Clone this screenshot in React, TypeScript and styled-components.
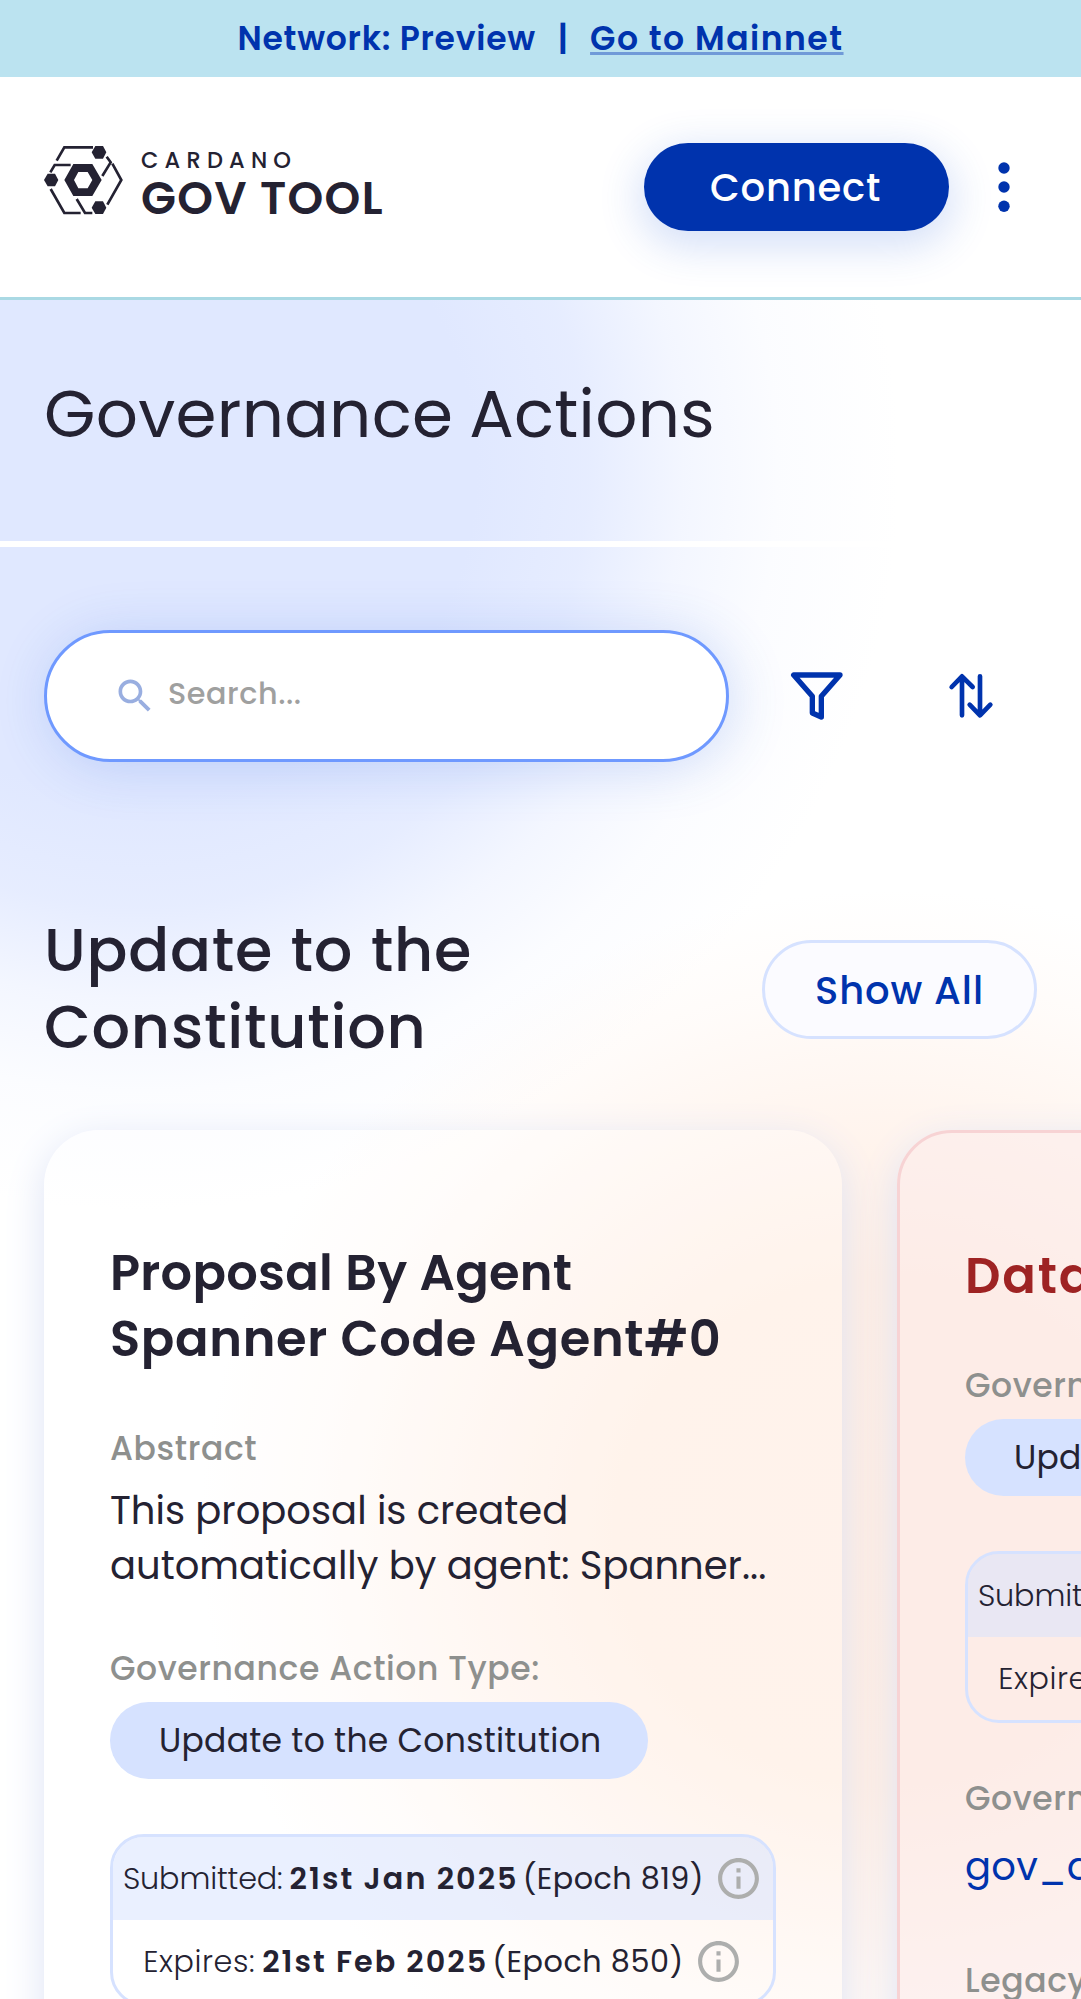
import React from "react";
import styled, { createGlobalStyle, css } from "styled-components";

const navy = "#0033ad";
const ink = "#242232";
const paleBlue = "#d6e2ff";

const GlobalStyle = createGlobalStyle`
  *, *::before, *::after { box-sizing: border-box; }
  body {
    margin: 0;
    background: #fff;
    color: ${ink};
    font-family: Poppins, Inter, "Open Sans", sans-serif;
  }
`;

const type = (size: number, weight: number, line: number) => css`
  font-size: ${size}px;
  font-weight: ${weight};
  line-height: ${line}px;
`;

const Page = styled.div`
  width: 1081px;
  height: 1999px;
  overflow: hidden;
  display: flex;
  flex-direction: column;
  background:
    radial-gradient(ellipse 800px 780px at 140px 470px,
      #e0e8ff 0%, #e0e8ff 42%, rgba(224, 232, 255, 0.8) 56%,
      rgba(224, 232, 255, 0.38) 68%, rgba(224, 232, 255, 0.12) 80%, rgba(224, 232, 255, 0) 95%),
    radial-gradient(ellipse 690px 640px at 890px 1530px,
      #ffede2 0%, #ffeee3 40%, rgba(255, 237, 226, 0.55) 65%,
      rgba(255, 237, 226, 0.2) 84%, rgba(255, 237, 226, 0) 100%),
    #fff;
`;

const Spaced = styled.span<{ $ls: number }>`
  letter-spacing: ${(p) => p.$ls}px;
  white-space: nowrap;
`;

const Banner = styled.div`
  flex: none;
  height: 77px;
  display: flex;
  align-items: center;
  justify-content: center;
  gap: 22px;
  background: #bbe3f0;
  color: ${navy};
  ${type(33, 600, 40)}
`;

const BannerLink = styled.a`
  letter-spacing: 1.5px;
  text-decoration: underline;
  text-decoration-color: #709ad8;
  text-decoration-thickness: 3px;
  text-underline-offset: 2px;
  text-decoration-skip-ink: none;
`;

const Header = styled.header`
  flex: none;
  height: 223px;
  padding: 66px 44px 0;
  display: flex;
  align-items: flex-start;
  justify-content: space-between;
  background: #fff;
  border-bottom: 3px solid #aad9e4;
`;

const Logo = styled.div`
  display: flex;
  gap: 17px;
  padding-top: 2px;
`;

const LogoWords = styled.div`
  display: flex;
  flex-direction: column;
  gap: 2px;
  padding-top: 2px;
`;

const LogoTop = styled.span`
  ${type(22.5, 500, 26)}
  letter-spacing: 6.2px;
`;

const LogoMain = styled.span`
  ${type(45.5, 600, 46)}
  letter-spacing: 1.3px;
`;

const HeaderActions = styled.div`
  display: flex;
  align-items: center;
  gap: 22px;
`;

const ConnectButton = styled.button`
  width: 305px;
  height: 88px;
  padding: 1px 2px 0 0;
  border: 0;
  border-radius: 44px;
  background: ${navy};
  color: #fff;
  font-family: inherit;
  ${type(38.5, 500, 66)}
  letter-spacing: 0.8px;
  box-shadow: 0 11px 41px 5px rgba(47, 98, 220, 0.2);
`;

const TitleBar = styled.div`
  flex: none;
  height: 247px;
  padding: 74px 44px 0;
  border-bottom: 6px solid #fff;
`;

const PageTitle = styled.h1`
  margin: 0;
  ${type(66, 400, 80)}
  letter-spacing: 0.3px;
  word-spacing: -2px;
`;

const Toolbar = styled.div`
  flex: none;
  margin-top: 83px;
  padding: 0 44px;
  display: flex;
  align-items: center;
`;

const SearchField = styled.div`
  width: 685px;
  height: 132px;
  padding: 0 66px;
  display: flex;
  align-items: center;
  gap: 11px;
  border: 3px solid #6f99ff;
  border-radius: 68px;
  background: #fff;
  color: #9fa09f;
  box-shadow: 5px 5px 55px rgba(47, 98, 220, 0.2);
`;

const Placeholder = styled.span`
  ${type(30.25, 500, 40)}
  letter-spacing: 0.55px;
  padding-bottom: 4px;
`;

const ToolIcons = styled.div`
  margin-left: 61px;
  display: flex;
  align-items: center;
  gap: 102px;
`;

const SectionHead = styled.div`
  flex: none;
  margin-top: 150px;
  padding: 0 44px;
  display: flex;
  align-items: center;
  justify-content: space-between;
`;

const SectionTitle = styled.h2`
  margin: 0;
  width: 520px;
  ${type(60.5, 500, 76.5)}
  letter-spacing: 0.75px;
  word-spacing: 1px;
`;

const ShowAll = styled.button`
  width: 275px;
  height: 99px;
  margin-top: 2px;
  padding: 2px 0 0;
  border: 3px solid ${paleBlue};
  border-radius: 50px;
  background: #fbfbff;
  color: ${navy};
  font-family: inherit;
  ${type(38.5, 500, 60)}
  letter-spacing: 0.9px;
`;

const Cards = styled.div`
  flex: none;
  margin-top: 65px;
  padding-left: 44px;
  display: flex;
  align-items: flex-start;
  gap: 55px;
`;

const Card = styled.article<{ $invalid?: boolean }>`
  flex: none;
  width: 798px;
  height: 1300px;
  padding: 110px 66px 0;
  display: flex;
  flex-direction: column;
  align-items: flex-start;
  border-radius: 55px;
  background: rgba(255, 255, 255, 0.3);
  box-shadow: 0 11px 41px #dde3f5;
  ${(p) =>
    p.$invalid &&
    css`
      border: 3px solid #f7d3d4;
      padding: 110px 65px 0;
      background: rgba(251, 235, 235, 0.55);
    `}
`;

const CardTitle = styled.h3<{ $invalid?: boolean }>`
  margin: 0 0 57px;
  display: flex;
  flex-direction: column;
  ${type(49.5, 600, 66)}
  color: ${(p) => (p.$invalid ? "#9e2323" : ink)};
`;

const Label = styled.div`
  ${type(33, 500, 40)}
  color: #8e908e;
  letter-spacing: 0.6px;
  white-space: nowrap;
`;

const Abstract = styled.p`
  margin: 14px 0 56px;
  display: flex;
  flex-direction: column;
  ${type(38.5, 400, 55)}
`;

const TypePill = styled.div`
  height: 77px;
  margin: 13px 0 55px;
  padding: 0 47px 0 49px;
  border-radius: 39px;
  background: ${paleBlue};
  ${type(33, 400, 77)}
  letter-spacing: 0.27px;
  white-space: nowrap;
`;

const Dates = styled.div`
  width: 666px;
  flex: none;
  overflow: hidden;
  border: 3px solid ${paleBlue};
  border-radius: 34px;
`;

const DateRow = styled.div<{ $tinted?: boolean }>`
  height: 83px;
  display: flex;
  align-items: center;
  justify-content: center;
  gap: 4px;
  ${type(30.25, 400, 40)}
  background: ${(p) => (p.$tinted ? "rgba(214, 226, 255, 0.5)" : "transparent")};
  svg { flex: none; margin-left: 6px; }
`;

const Light = styled(Spaced)`
  font-weight: 300;
  margin-right: 3px;
`;

const Strong = styled(Spaced)`
  font-weight: 600;
`;

const IdLabel = styled(Label)`
  margin-top: 56px;
`;

const ActionId = styled.div`
  margin: 20px 0 67px;
  color: ${navy};
  ${type(38.5, 400, 55)}
  letter-spacing: 0.3px;
`;

const LogoMark = () => (
  <svg width="80" height="70" viewBox="12 15 240 210" fill={ink}>
    <path fillRule="evenodd" d="M73 120 100 72H157L185 120 157 168H100ZM102 120 115 145H143L157 120 143 96H115Z" />
    <path d="M155 37 166 18H189L199 37 189 56H166Z" />
    <path d="M12 120 23 101H45L55 120 45 139H23Z" />
    <path d="M155 203 166 184H189L199 203 189 222H166Z" />
    <path
      d="M159 22H73L50 62M92 75H44L31 97M200 50 212 67 187 108M217 71 244 120 202 194M32 147 73 219H122M110 177 135 219H157"
      fill="none"
      stroke={ink}
      strokeWidth="8"
    />
  </svg>
);

const MoreIcon = () => (
  <svg width="66" height="66" viewBox="0 0 66 66" fill={navy}>
    <circle cx="33" cy="14" r="5.7" />
    <circle cx="33" cy="33" r="5.7" />
    <circle cx="33" cy="52.3" r="5.7" />
  </svg>
);

const SearchIcon = () => (
  <svg width="44" height="44" viewBox="0 0 24 24" fill="#99aee0">
    <path d="M15.5 14h-.79l-.28-.27C15.41 12.59 16 11.11 16 9.5 16 5.91 13.09 3 9.5 3S3 5.91 3 9.5 5.91 16 9.5 16c1.61 0 3.09-.59 4.23-1.57l.27.28v.79l5 4.99L20.49 19l-4.99-5zm-6 0C7.01 14 5 11.99 5 9.5S7.01 5 9.5 5 14 7.01 14 9.5 11.99 14 9.5 14z" />
  </svg>
);

const FilterIcon = () => (
  <svg width="55" height="50" viewBox="150 122 165 150">
    <path d="M161 134H300L244 198V260L217 248V198Z" fill="none" stroke={navy} strokeWidth="16" strokeLinejoin="round" />
  </svg>
);

const SortIcon = () => (
  <svg width="48" height="48" viewBox="620 126 144 144">
    <path
      d="M665 140V256M634 171 665 139 697 171M719 139V255M688 224 719 256 750 224"
      fill="none"
      stroke={navy}
      strokeWidth="14"
      strokeLinecap="round"
      strokeLinejoin="round"
    />
  </svg>
);

const InfoIcon = () => (
  <svg width="49" height="49" viewBox="0 0 24 24" fill="#adaead">
    <path d="M11 7h2v2h-2zm0 4h2v6h-2zm1-9C6.48 2 2 6.48 2 12s4.48 10 10 10 10-4.48 10-10S17.52 2 12 2zm0 18c-4.41 0-8-3.59-8-8s3.59-8 8-8 8 3.59 8 8-3.59 8-8 8z" />
  </svg>
);

const ActionDates = () => (
  <Dates>
    <DateRow $tinted>
      <Light $ls={-0.15}>Submitted:</Light>
      <Strong $ls={2.05}>21st Jan 2025</Strong>
      <Spaced $ls={0.45}>(Epoch 819)</Spaced>
      <InfoIcon />
    </DateRow>
    <DateRow>
      <Light $ls={0.6}>Expires:</Light>
      <Strong $ls={2}>21st Feb 2025</Strong>
      <Spaced $ls={0.55}>(Epoch 850)</Spaced>
      <InfoIcon />
    </DateRow>
  </Dates>
);

export default function App() {
  return (
    <>
      <GlobalStyle />
      <Page>
        <Banner>
          <Spaced $ls={0.75}>Network: Preview</Spaced>
          <span>|</span>
          <BannerLink>Go to Mainnet</BannerLink>
        </Banner>
        <Header>
          <Logo>
            <LogoMark />
            <LogoWords>
              <LogoTop>CARDANO</LogoTop>
              <LogoMain>GOV TOOL</LogoMain>
            </LogoWords>
          </Logo>
          <HeaderActions>
            <ConnectButton>Connect</ConnectButton>
            <MoreIcon />
          </HeaderActions>
        </Header>
        <TitleBar>
          <PageTitle>Governance Actions</PageTitle>
        </TitleBar>
        <Toolbar>
          <SearchField>
            <SearchIcon />
            <Placeholder>Search...</Placeholder>
          </SearchField>
          <ToolIcons>
            <FilterIcon />
            <SortIcon />
          </ToolIcons>
        </Toolbar>
        <SectionHead>
          <SectionTitle>Update to the Constitution</SectionTitle>
          <ShowAll>Show All</ShowAll>
        </SectionHead>
        <Cards>
          <Card>
            <CardTitle>
              <Spaced $ls={0.25}>Proposal By Agent</Spaced>
              <Spaced $ls={0.68}>Spanner Code Agent#0</Spaced>
            </CardTitle>
            <Label>Abstract</Label>
            <Abstract>
              <Spaced $ls={0}>This proposal is created</Spaced>
              <Spaced $ls={0}>automatically by agent: Spanner...</Spaced>
            </Abstract>
            <Label>Governance Action Type:</Label>
            <TypePill>Update to the Constitution</TypePill>
            <ActionDates />
          </Card>
          <Card $invalid>
            <CardTitle $invalid>
              <Spaced $ls={1.8}>Data Missing</Spaced>
            </CardTitle>
            <Label>Governance Action Type:</Label>
            <TypePill>Update to the Constitution</TypePill>
            <ActionDates />
            <IdLabel>Governance Action ID:</IdLabel>
            <ActionId>gov_action</ActionId>
            <Label>Legacy Governance Action ID:</Label>
          </Card>
        </Cards>
      </Page>
    </>
  );
}
